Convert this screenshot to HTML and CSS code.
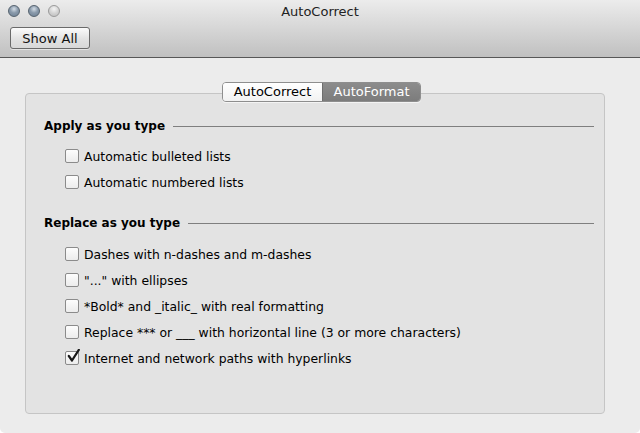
FILE: index.html
```html
<!DOCTYPE html>
<html>
<head>
<meta charset="utf-8">
<link rel="stylesheet" href="styles.css">
</head>
<body>
<div class="window">
  <div class="titlebar">
    <div class="lights">
      <span class="light"></span>
      <span class="light"></span>
      <span class="light off"></span>
    </div>
    <div class="title">AutoCorrect</div>
    <div class="toolbar">
      <button class="btn">Show All</button>
    </div>
  </div>
  <div class="content">
    <div class="group">
      <div class="tabs">
        <span class="tab">AutoCorrect</span>
        <span class="tab active">AutoFormat</span>
      </div>
      <div class="section">
        <div class="heading"><span>Apply as you type</span><i class="rule"></i></div>
        <label class="row"><span class="cb"></span>Automatic bulleted lists</label>
        <label class="row"><span class="cb"></span>Automatic numbered lists</label>
      </div>
      <div class="section second">
        <div class="heading"><span>Replace as you type</span><i class="rule"></i></div>
        <label class="row"><span class="cb"></span>Dashes with n-dashes and m-dashes</label>
        <label class="row"><span class="cb"></span>"..." with ellipses</label>
        <label class="row"><span class="cb"></span>*Bold* and _italic_ with real formatting</label>
        <label class="row"><span class="cb"></span>Replace *** or ___ with horizontal line (3 or more characters)</label>
        <label class="row"><span class="cb checked"><svg viewBox="0 0 14 15" width="14" height="15"><path d="M2.8 7 L6 11.5 L12.8 0.8" fill="none" stroke="#1a1a1a" stroke-width="2.2" stroke-linecap="round" stroke-linejoin="round"/></svg></span>Internet and network paths with hyperlinks</label>
      </div>
    </div>
  </div>
</div>
</body>
</html>
```
FILE: styles.css
```css
html, body {
  margin: 0;
  padding: 0;
  background: #ffffff;
}
body {
  font-family: "DejaVu Sans", "Lucida Grande", sans-serif;
  font-size: 12.4px;
  color: #000;
}
.window {
  width: 640px;
  height: 433px;
  background: #ececec;
  border-radius: 0 0 5px 5px;
  overflow: hidden;
  display: flex;
  flex-direction: column;
}
.titlebar {
  height: 57px;
  background: linear-gradient(#ececec, #d6d6d6 50%, #c0c0c0);
  border-bottom: 1px solid #575757;
  position: relative;
  display: flex;
  flex-direction: column;
}
.lights {
  position: absolute;
  left: 8px;
  top: 5px;
  display: flex;
  gap: 8px;
}
.light {
  width: 12px;
  height: 12px;
  border-radius: 50%;
  box-sizing: border-box;
  border: 1px solid #56636f;
  background: radial-gradient(circle at 50% 30%, #d4dde6 0%, #8a9aab 45%, #6c7f92 100%);
}
.light.off {
  border-color: #9a9a9a;
  background: radial-gradient(circle at 50% 30%, #f4f4f4 0%, #d0d0d0 55%, #bcbcbc 100%);
}
.title {
  text-align: center;
  font-size: 13px;
  line-height: 16px;
  padding-top: 4px;
  color: #222;
}
.toolbar {
  padding: 7px 0 0 10px;
}
.btn {
  font-family: inherit;
  font-size: 13px;
  width: 80px;
  height: 22px;
  padding: 0;
  border: 1px solid #6a6a6a;
  border-radius: 3px;
  background: linear-gradient(#fbfbfb, #e2e2e2 55%, #d8d8d8);
  color: #111;
  box-shadow: 0 1px 0 rgba(255,255,255,0.5);
}
.content {
  flex: 1;
  padding: 35px 35px 19px 25px;
}
.group {
  height: 100%;
  box-sizing: border-box;
  background: #e3e3e3;
  border: 1px solid #c5c5c5;
  border-radius: 4px;
  position: relative;
  padding: 23px 10px 0 18px;
}
.tabs {
  position: absolute;
  top: -12px;
  left: 196px;
  display: flex;
  width: 199px;
  height: 20px;
  border: 1px solid #8e8e8e;
  border-radius: 4px;
  overflow: hidden;
  box-sizing: border-box;
  box-shadow: 0 1px 0 rgba(255,255,255,0.6);
}
.tab {
  box-sizing: border-box;
  font-size: 13px;
  line-height: 18px;
  width: 99px;
  text-align: center;
  background: linear-gradient(#ffffff, #f2f2f2);
  color: #000;
}
.tab.active {
  width: 98px;
  background: linear-gradient(#8c8c8c, #7c7c7c);
  color: #fff;
  border-left: 1px solid #6e6e6e;
}
.heading {
  display: flex;
  align-items: center;
  font-weight: bold;
  font-size: 12px;
  height: 18px;
  margin-bottom: 8px;
}
.rule {
  flex: 1;
  height: 1px;
  background: #7f7f7f;
  margin-left: 8px;
}
.section.second {
  margin-top: 19px;
}
.section.second .heading {
  margin-bottom: 9px;
}
.row {
  display: flex;
  align-items: center;
  height: 26px;
  padding-left: 21px;
}
.cb {
  width: 12px;
  height: 12px;
  border: 1px solid #8b8b8b;
  border-radius: 2px;
  background: linear-gradient(#fdfdfd, #ececec);
  margin-right: 5px;
  position: relative;
  flex: none;
}
.cb svg {
  position: absolute;
  left: 0px;
  top: -3px;
}
```
